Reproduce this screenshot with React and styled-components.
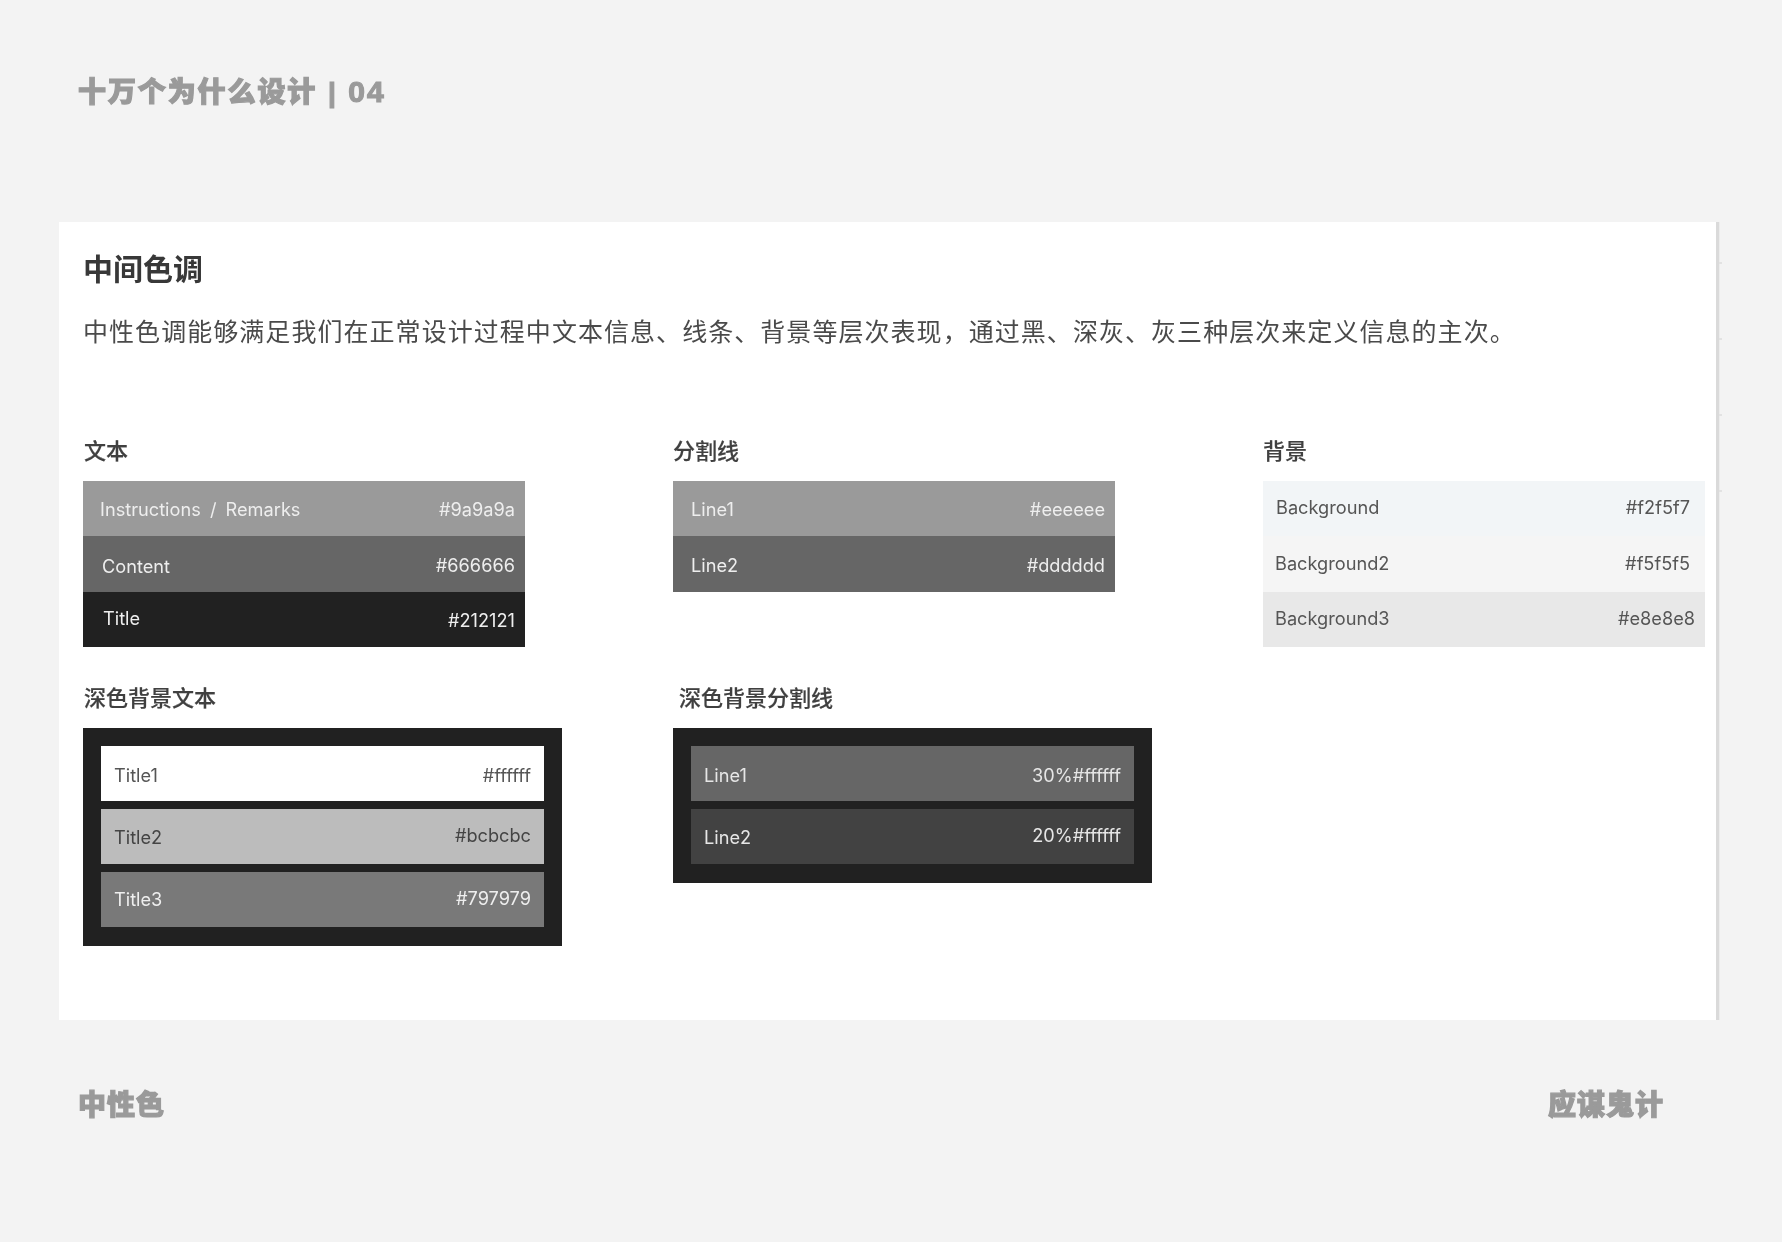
import React from "react";
import styled, { createGlobalStyle } from "styled-components";

const cjk = `"Liberation Sans", "Noto Sans CJK SC", sans-serif`;
const ui = `Inter, "Noto Sans CJK SC", sans-serif`;

const GlobalStyle = createGlobalStyle`
  html, body { margin: 0; padding: 0; background: #f3f3f3; }
`;

const textRows = [
  { name: "Instructions / Remarks", value: "#9a9a9a", bg: "#9a9a9a", fg: "#eeeeee", left: 17, right: 10, nameDy: 0, valueDy: 0 },
  { name: "Content", value: "#666666", bg: "#666666", fg: "#eeeeee", left: 19, right: 10, nameDy: 2, valueDy: 1 },
  { name: "Title", value: "#212121", bg: "#212121", fg: "#eeeeee", left: 20, right: 10, nameDy: -1, valueDy: 1 },
];
const lineRows = [
  { name: "Line1", value: "#eeeeee", bg: "#9a9a9a", fg: "#eeeeee", left: 18, right: 10, nameDy: 0, valueDy: 0 },
  { name: "Line2", value: "#dddddd", bg: "#666666", fg: "#eeeeee", left: 18, right: 10, nameDy: 1, valueDy: 1 },
];
const backgroundRows = [
  { name: "Background", value: "#f2f5f7", bg: "#f2f5f7", fg: "#555555", left: 13, right: 15, nameDy: -2, valueDy: -2 },
  { name: "Background2", value: "#f5f5f5", bg: "#f5f5f5", fg: "#555555", left: 12, right: 15, nameDy: -1, valueDy: -1 },
  { name: "Background3", value: "#e8e8e8", bg: "#e8e8e8", fg: "#555555", left: 12, right: 10, nameDy: -1, valueDy: -1 },
];
const darkTextRows = [
  { name: "Title1", value: "#ffffff", bg: "#ffffff", fg: "#555555", left: 13, right: 13, nameDy: 1, valueDy: 1 },
  { name: "Title2", value: "#bcbcbc", bg: "#bcbcbc", fg: "#444444", left: 13, right: 13, nameDy: 1, valueDy: -1 },
  { name: "Title3", value: "#797979", bg: "#797979", fg: "#eeeeee", left: 13, right: 13, nameDy: 0, valueDy: -1 },
];
const darkLineRows = [
  { name: "Line1", value: "30%#ffffff", bg: "#666666", fg: "#e6e6e6", left: 13, right: 13, nameDy: 1, valueDy: 1 },
  { name: "Line2", value: "20%#ffffff", bg: "#424242", fg: "#e6e6e6", left: 13, right: 13, nameDy: 1, valueDy: -1 },
];
const edgeTicks = [41, 117, 193, 269];

function Swatches({ rows }) {
  return rows.map((row) => (
    <Row key={row.name} $bg={row.bg} $fg={row.fg} $left={row.left} $right={row.right}>
      <RowText $dy={row.nameDy}>{row.name}</RowText>
      <RowText $dy={row.valueDy}>{row.value}</RowText>
    </Row>
  ));
}

export default function App() {
  return (
    <Page>
      <GlobalStyle />
      <Header>
        十万个为什么设计 | <HeaderNumber>04</HeaderNumber>
      </Header>
      <Card>
        {edgeTicks.map((top) => (
          <EdgeTick key={top} $top={top} />
        ))}
        <Title>中间色调</Title>
        <Description>
          中性色调能够满足我们在正常设计过程中文本信息、线条、背景等层次表现，通过黑、深灰、灰三种层次来定义信息的主次。
        </Description>
        <Groups>
          <Group>
            <Label $indent={1}>文本</Label>
            <Table>
              <Swatches rows={textRows} />
            </Table>
          </Group>
          <Group>
            <Label>分割线</Label>
            <Table>
              <Swatches rows={lineRows} />
            </Table>
          </Group>
          <Group>
            <Label>背景</Label>
            <Table>
              <Swatches rows={backgroundRows} />
            </Table>
          </Group>
          <Group>
            <Label $indent={1}>深色背景文本</Label>
            <DarkPanel>
              <Swatches rows={darkTextRows} />
            </DarkPanel>
          </Group>
          <Group>
            <Label $indent={6}>深色背景分割线</Label>
            <DarkPanel>
              <Swatches rows={darkLineRows} />
            </DarkPanel>
          </Group>
        </Groups>
      </Card>
      <Footer>
        <FooterText>中性色</FooterText>
        <FooterText>应谋鬼计</FooterText>
      </Footer>
    </Page>
  );
}

const Page = styled.div`
  width: 1782px;
  height: 1242px;
  overflow: hidden;
  background: #f3f3f3;
`;
const Header = styled.div`
  box-sizing: border-box;
  height: 222px;
  padding: 72px 0 0 78px;
  font-family: ${cjk};
  font-size: 28px;
  line-height: 40px;
  font-weight: 900;
  letter-spacing: 1.9px;
  word-spacing: 1px;
  color: #9a9a9a;
  -webkit-text-stroke: 1.2px #9a9a9a;
  filter: blur(0.5px);
`;
const HeaderNumber = styled.span`
  font-size: 30px;
  letter-spacing: 2px;
`;
const Card = styled.section`
  position: relative;
  box-sizing: border-box;
  margin-left: 59px;
  width: 1660px;
  height: 798px;
  padding: 28px 0 0 24px;
  background: #ffffff;
  border-right: 3px solid #dadada;
  box-shadow: 1px 0 0 #ececec;
`;
const EdgeTick = styled.i`
  position: absolute;
  top: ${(p) => p.$top - 1}px;
  right: -6px;
  width: 3px;
  height: 2px;
  background: #e2e2e2;
`;
const Title = styled.h1`
  margin: 0;
  font-family: ${cjk};
  font-size: 30px;
  line-height: 40px;
  font-weight: 700;
  color: #383838;
  filter: blur(0.4px);
`;
const Description = styled.p`
  margin: 22px 0 0;
  font-family: ${cjk};
  font-size: 25px;
  line-height: 40px;
  letter-spacing: 1.05px;
  color: #4a4a4a;
  white-space: nowrap;
  filter: blur(0.4px);
`;
const Groups = styled.div`
  display: grid;
  grid-template-columns: 590px 590px 443px;
  align-items: start;
  row-gap: 37px;
  margin-top: 85px;
`;
const Group = styled.div`
  display: flex;
  flex-direction: column;
  align-items: flex-start;
`;
const Label = styled.h2`
  margin: 0 0 14px ${(p) => p.$indent || 0}px;
  font-family: ${cjk};
  font-size: 22px;
  line-height: 30px;
  font-weight: 500;
  color: #404040;
  -webkit-text-stroke: 0.2px #404040;
  filter: blur(0.4px);
`;
const Table = styled.div`
  width: 442px;
`;
const DarkPanel = styled.div`
  box-sizing: border-box;
  display: flex;
  flex-direction: column;
  gap: 7.5px;
  width: 479px;
  padding: 18px 18px 19px;
  background: #212121;
`;
const Row = styled.div`
  box-sizing: border-box;
  display: flex;
  justify-content: space-between;
  align-items: center;
  height: 55.33px;
  padding: 0 ${(p) => p.$right}px 0 ${(p) => p.$left}px;
  background: ${(p) => p.$bg};
  color: ${(p) => p.$fg};
`;
const RowText = styled.span`
  transform: translateY(${(p) => p.$dy || 0}px);
  font-family: ${ui};
  font-size: 18.2px;
  word-spacing: 4px;
  white-space: nowrap;
  filter: blur(0.4px);
`;
const Footer = styled.div`
  display: flex;
  justify-content: space-between;
  padding: 66px 118px 0 78px;
`;
const FooterText = styled.div`
  font-family: ${cjk};
  font-size: 28px;
  line-height: 40px;
  font-weight: 900;
  letter-spacing: 1px;
  color: #9a9a9a;
  -webkit-text-stroke: 1.2px #9a9a9a;
  filter: blur(0.5px);
`;
